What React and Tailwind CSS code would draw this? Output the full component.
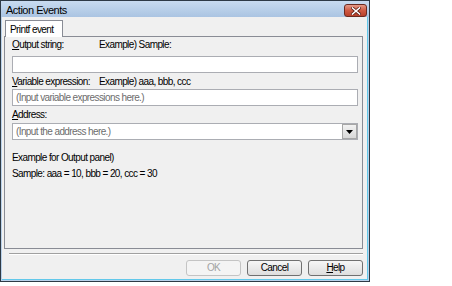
import React from 'react'

const font = { fontFamily: '"Liberation Sans", Arial, sans-serif' }

function U({ children }) {
  return <span className="underline underline-offset-[1px]">{children}</span>
}

function TextBox({ placeholder }) {
  return (
    <div className="h-[17px] w-[346px] border border-[#abadb3] bg-white flex items-center pl-[3px] text-[10px] tracking-[-0.6px] text-[#6d6d6d] leading-none whitespace-nowrap">
      {placeholder}
    </div>
  )
}

function Button({ children, disabled }) {
  return (
    <div
      className={`w-[55px] h-[16px] rounded-[3px] border flex items-center justify-center text-[10px] tracking-[-0.6px] leading-none bg-gradient-to-b ${
        disabled ? 'border-[#c4c4c4] text-[#a3a3a3] from-[#f4f4f4] to-[#f4f4f4]' : 'border-[#707070] text-black from-[#f6f6f6] to-[#dedede]'
      }`}
    >
      {children}
    </div>
  )
}

export default function App() {
  return (
    <div className="w-[452px] h-[286px] bg-white" style={font}>
      <div className="w-[370px] h-[282px] border border-[#2e3a46] bg-[#b9d1ea] flex flex-col">
        <div className="h-[16px] flex items-start justify-between pl-[5px] pr-[2px] bg-gradient-to-b from-[#c8dbf0] to-[#aac4e2]">
          <span className="text-[11px] tracking-[-0.5px] leading-none mt-[4px] text-black whitespace-nowrap">Action Events</span>
          <div className="mt-[3px] w-[23px] h-[13px] rounded-[3px] border border-[#6b2a20] bg-gradient-to-b from-[#e59a88] via-[#cf5a43] to-[#b8402b] flex items-center justify-center">
            <svg width="10" height="8" viewBox="0 0 10 8">
              <path d="M1.5 1 L8.5 7 M8.5 1 L1.5 7" stroke="#5a1a10" strokeWidth="3" strokeLinecap="square" />
              <path d="M1.5 1 L8.5 7 M8.5 1 L1.5 7" stroke="#ffffff" strokeWidth="1.6" strokeLinecap="square" />
            </svg>
          </div>
        </div>
        <div className="flex-1 mx-[1px] mb-[1px] bg-[#f0f0f0] border-r border-b border-[#62c8ea] flex flex-col pt-[3px] pl-[2px] pr-[4px]">
          <div className="flex">
            <div className="ml-[1px] w-[58px] h-[17px] bg-white border border-b-0 border-[#898c95] text-[10px] tracking-[-0.6px] leading-none pl-[4px] pt-[4px] relative z-10 -mb-[1px] whitespace-nowrap">
              Printf event
            </div>
          </div>
          <div className="h-[213px] border border-[#898c95] bg-[#f0f0f0] pl-[7px] pr-[4px] pt-[2px] text-[10px] tracking-[-0.6px] text-black whitespace-nowrap">
            <div className="h-[12px] flex items-center leading-none">
              <span className="w-[87px]">
                <U>O</U>utput string:
              </span>
              <span>Example) Sample:</span>
            </div>
            <div className="mt-[5px]">
              <TextBox placeholder="" />
            </div>
            <div className="mt-[3px] h-[12px] flex items-center leading-none">
              <span className="w-[87px]">
                <U>V</U>ariable expression:
              </span>
              <span>Example) aaa, bbb, ccc</span>
            </div>
            <div className="mt-[1px]">
              <TextBox placeholder="(Input variable expressions here.)" />
            </div>
            <div className="mt-[3px] h-[12px] flex items-center leading-none">
              <span>
                <U>A</U>ddress:
              </span>
            </div>
            <div className="mt-[2px] h-[17px] w-[346px] border border-[#abadb3] bg-white flex items-center justify-between pl-[3px] text-[#6d6d6d] leading-none">
              <span>(Input the address here.)</span>
              <div className="w-[15px] h-[15px] border border-[#a7a7a7] bg-gradient-to-b from-[#f2f2f2] to-[#d8d8d8] flex items-center justify-center">
                <svg width="7" height="4" viewBox="0 0 7 4">
                  <path d="M0 0 H7 L3.5 4 Z" fill="#000" />
                </svg>
              </div>
            </div>
            <div className="mt-[12px] h-[12px] flex items-center leading-none">Example for Output panel)</div>
            <div className="mt-[4px] h-[12px] flex items-center leading-none">Sample: aaa = 10, bbb = 20, ccc = 30</div>
          </div>
          <div className="mt-[4px] ml-[5px] h-[2px] border-t border-[#a0a0a0] border-b border-b-white" />
          <div className="mt-[5px] flex justify-end gap-[6px]">
            <Button disabled>OK</Button>
            <Button>Cancel</Button>
            <Button>
              <span>
                <U>H</U>elp
              </span>
            </Button>
          </div>
        </div>
      </div>
    </div>
  )
}
